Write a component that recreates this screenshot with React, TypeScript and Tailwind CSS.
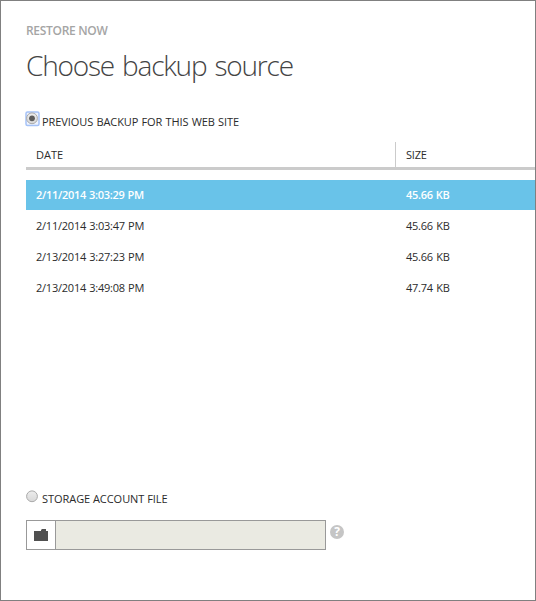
import React from 'react';

const backups = [
  { date: '2/11/2014 3:03:29 PM', size: '45.66 KB' },
  { date: '2/11/2014 3:03:47 PM', size: '45.66 KB' },
  { date: '2/13/2014 3:27:23 PM', size: '45.66 KB' },
  { date: '2/13/2014 3:49:08 PM', size: '47.74 KB' },
];

function Radio({ checked }: { checked?: boolean }) {
  return (
    <svg width="14" height="14" viewBox="0 0 14 14" className="block shrink-0 overflow-visible" aria-hidden="true">
      {checked && <rect x="0" y="0" width="13" height="13.5" rx="1.5" fill="#eef3fd" stroke="#a5c2f7" strokeWidth="1.5" />}
      <defs>
        <linearGradient id="face" x1="0" y1="0" x2="0" y2="1">
          <stop offset="0" stopColor="#ededed" />
          <stop offset="1" stopColor="#d8d8d8" />
        </linearGradient>
      </defs>
      <circle cx="6" cy="6.3" r="5.4" fill="url(#face)" stroke="#aaaaaa" />
      {checked && <circle cx="6" cy="6.3" r="2.9" fill="#5c5c5c" />}
    </svg>
  );
}

export default function App() {
  const [selected] = React.useState(0);
  return (
    <main className="flex h-[601px] w-[536px] flex-col overflow-hidden border border-[#808080] bg-white pl-[25px] font-['Open_Sans','Noto_Sans',sans-serif] text-[11px] text-[#2b2b2b]">
      <p className="mt-[22px] h-4 text-[12px] leading-4 font-semibold tracking-[-0.3px] text-[#a5a5a5]">RESTORE NOW</p>
      <h1 className="mt-[6px] h-10 text-[28px] leading-10 font-light tracking-[-1.2px] [word-spacing:2px] whitespace-nowrap text-[#444]">Choose backup source</h1>

      <label className="mt-[27px] flex h-4 items-start gap-[2px]">
        <Radio checked />
        <span className="pt-[2px] leading-4 tracking-[-0.07px] [word-spacing:0.4px]">PREVIOUS BACKUP FOR THIS WEB SITE</span>
      </label>

      <section className="mt-[14px]">
        <div className="flex h-[28px] border-b-3 border-[#cbcbcb]">
          <div className="w-[369px] pl-[10px] leading-[26px]">DATE</div>
          <div className="border-l border-[#cbcbcb] pl-[10px] leading-[26px] tracking-[-0.2px]">SIZE</div>
        </div>
        <div className="mt-[10px] flex flex-col gap-px tracking-[-0.23px] [word-spacing:0.6px]">
          {backups.map((row, i) => (
            <div key={row.date} className={`flex h-[30px] leading-[30px] ${i === selected ? 'bg-[#69c3e9] font-semibold tracking-[-0.3px] text-white' : ''}`}>
              <div className="w-[370px] pl-[10px]">{row.date}</div>
              <div className="pl-[10px]">{row.size}</div>
            </div>
          ))}
        </div>
      </section>

      <label className="mt-[187px] flex h-4 items-start gap-[2px]">
        <Radio />
        <span className="pt-[1px] leading-4 tracking-[-0.05px]">STORAGE ACCOUNT FILE</span>
      </label>

      <div className="mt-[14px] flex">
        <div className="flex h-[30px] w-[300px] border border-[#999]">
          <button className="flex w-[29px] items-center justify-center border-r border-[#999] bg-white" aria-label="Browse">
            <svg width="14" height="12" viewBox="0 0 14 12" fill="#505050">
              <path d="M0 2H7V1L8 0H12V2H14V12H0Z" />
            </svg>
          </button>
          <div className="flex-1 bg-[#eaeae2]" />
        </div>
        <span className="mt-[5px] ml-1 flex size-[14px] items-center justify-center rounded-full bg-[#c5c5c5] text-[12px] leading-none font-bold text-white">?</span>
      </div>
    </main>
  );
}
